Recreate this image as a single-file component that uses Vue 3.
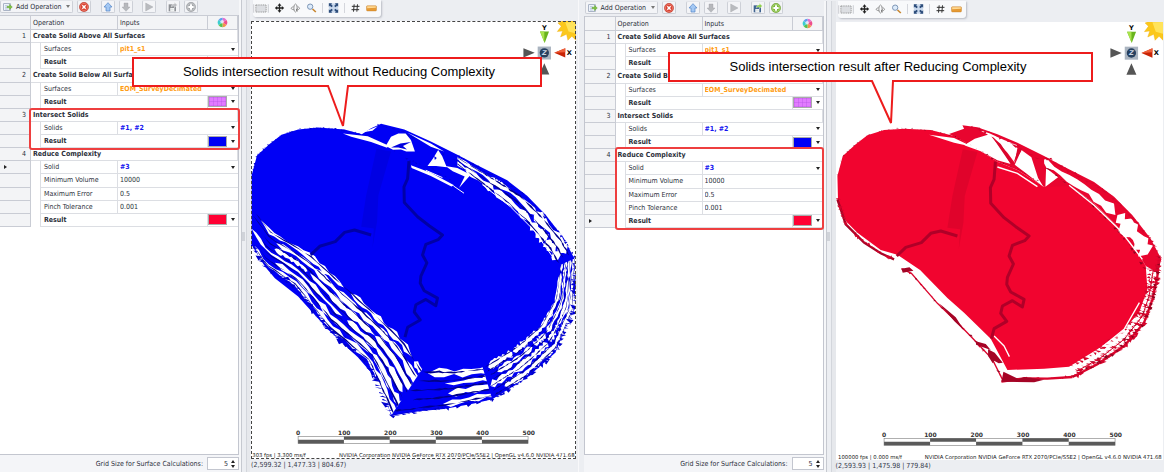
<script setup>
const refs = ['#1', '#2', '#3']

function makeRows(rowAt) {
  const rows = [
    { kind: 'group', n: 1, name: 'Create Solid Above All Surfaces' },
    { kind: 'select', name: 'Surfaces', value: 'pit1_s1', tone: 'orange' },
    { kind: 'result', swatch: 'violet' },
    { kind: 'group', n: 2, name: 'Create Solid Below All Surfaces' },
    { kind: 'select', name: 'Surfaces', value: 'EOM_SurveyDecimated', tone: 'orange' },
    { kind: 'result', swatch: 'violet' },
    { kind: 'group', n: 3, name: 'Intersect Solids' },
    { kind: 'select', name: 'Solids', value: refs.slice(0, 2).join(', '), tone: 'blue' },
    { kind: 'result', swatch: 'bluefill' },
    { kind: 'group', n: 4, name: 'Reduce Complexity' },
    { kind: 'select', name: 'Solid', value: refs[2], tone: 'blue' },
    { kind: 'value', name: 'Minimum Volume', value: '10000' },
    { kind: 'value', name: 'Maximum Error', value: '0.5' },
    { kind: 'value', name: 'Pinch Tolerance', value: '0.001' },
    { kind: 'result', swatch: 'redfill' },
  ]
  rows[rowAt].current = true
  return rows
}

const apps = [
  {
    id: 'before', active: false, rows: makeRows(10),
    callout: 'Solids intersection result without Reducing Complexity',
    shape: '2,2 410,2 410,30 217,30 212,70 197,30 2,30', w: 412, textX: 208,
    fps: '303 fps | 3.300 ms/f', coords: '(2,599.32 | 1,477.33 | 804.67)',
  },
  {
    id: 'after', active: true, rows: makeRows(14),
    callout: 'Solids intersection result after Reducing Complexity',
    shape: '2,2 425,2 425,30 226,30 224,72 205,30 2,30', w: 427, textX: 211,
    fps: '100000 fps | 0.000 ms/f', coords: '(2,593.93 | 1,475.98 | 779.84)',
  },
]

/* Seeded generator keeps the broken mesh edges stable between renders */
function rng(seed) {
  let s = seed
  return () => {
    s = (s * 1664525 + 1013904223) % 4294967296
    return s / 4294967296
  }
}
function along(line, u) {
  const seg = []
  let total = 0
  for (let i = 1; i < line.length; i++) {
    const d = Math.hypot(line[i][0] - line[i - 1][0], line[i][1] - line[i - 1][1])
    seg.push(d)
    total += d
  }
  let d = Math.max(0, Math.min(1, u)) * total
  for (let i = 0; i < seg.length; i++) {
    if (d <= seg[i] || i === seg.length - 1) {
      const t = d / seg[i]
      return [line[i][0] + (line[i + 1][0] - line[i][0]) * t, line[i][1] + (line[i + 1][1] - line[i][1]) * t]
    }
    d -= seg[i]
  }
}
function between(a, b, u, v) {
  const p = along(a, u)
  const q = along(b, u)
  return [p[0] + (q[0] - p[0]) * v, p[1] + (q[1] - p[1]) * v]
}
const fmt = pts => 'M' + pts.map(p => p[0].toFixed(1) + ' ' + p[1].toFixed(1)).join('L') + 'Z'
function streaks(a, b, lanes, seed, step, thick, n = 6) {
  const r = rng(seed)
  let d = ''
  for (let k = 0; k < lanes; k++) {
    const v = (k + 0.5) / lanes
    let u = r() * step
    while (u < 1) {
      const len = step * (0.6 + r() * 1.8)
      const top = []
      const bot = []
      for (let i = 0; i <= n; i++) {
        const uu = u + (len * i) / n
        const w = i === 0 || i === n ? 0 : (thick * (0.25 + r() * 0.9)) / lanes
        const drift = (r() - 0.5) * 0.12 / lanes
        top.push(between(a, b, uu, v - w / 2 + drift))
        bot.unshift(between(a, b, uu, v + w / 2 + drift))
      }
      d += fmt(top.concat(bot))
      u += len * (0.8 + r() * 0.3)
    }
  }
  return d
}
function teeth(line, count, size, seed) {
  const r = rng(seed)
  let d = ''
  for (let i = 0; i < count; i++) {
    const p = along(line, (i + r() * 0.8) / count)
    const w = size * (0.4 + r() * 0.7)
    const dx = (r() - 0.5) * size
    const dy = (r() - 0.5) * size * 2
    d += fmt([[p[0] - w, p[1] - w * 0.4], [p[0] + w, p[1] + w * 0.2 * (r() - 0.5)], [p[0] + dx, p[1] + dy]])
  }
  return d
}

const leftIn = [[20, 270], [80, 345], [200, 415], [340, 540], [480, 672], [538, 758]]
const leftOut = [[20, 390], [60, 455], [150, 515], [250, 645], [370, 745], [440, 905]]
const baseIn = [[535, 757], [640, 762], [715, 755]]
const baseOut = [[440, 905], [600, 884], [745, 855]]
const bendIn = [[715, 755], [820, 690], [890, 630], [935, 550], [950, 450]]
const bendOut = [[745, 855], [850, 790], [940, 705], [990, 590], [996, 430]]
const topIn = [[944, 460], [911, 405], [846, 326], [784, 266], [700, 198], [640, 150]]
const topOut = [[992, 430], [960, 370], [900, 300], [835, 235], [750, 185], [640, 122]]
const crest = [[640, 140], [560, 92], [480, 52], [400, 30]]
const rimIn = [[20, 180], [36, 120], [75, 85], [110, 58], [160, 42], [220, 37], [300, 44], [370, 62], [430, 92], [500, 137], [560, 160], [630, 200]]

const white = streaks(leftIn, leftOut, 6, 15, 0.26, 0.92, 16) + streaks(baseIn, baseOut, 4, 7, 0.6, 0.8, 10) +
  streaks(bendIn, bendOut, 4, 23, 0.16, 1, 12) + streaks(topIn, topOut, 2, 31, 0.2, 1.15, 8)
const navy = streaks(leftIn, leftOut, 7, 77, 0.11, 0.22) + streaks(baseIn, baseOut, 5, 71, 0.2, 0.25) +
  streaks(bendIn, bendOut, 7, 73, 0.06, 0.25) + streaks(topIn, topOut, 3, 79, 0.1, 0.3)
const blueTeeth = teeth(leftOut, 60, 14, 5) + teeth(baseOut, 20, 10, 6) + teeth(bendOut, 55, 11, 8) +
  teeth(topOut, 40, 7, 9) + teeth(crest, 24, 7, 10) + teeth(rimIn, 60, 5, 12)

const redLeft = [[20, 250], [45, 325], [100, 380], [150, 412], [190, 430]]
const redSlope = [[212, 458], [242, 472], [320, 562], [385, 625], [440, 682], [485, 730], [515, 790]]
const redBase = [[512, 797], [580, 787], [650, 788], [725, 783]]
const redBend = [[725, 783], [800, 745], [880, 690], [940, 620], [965, 550], [980, 480], [985, 420]]
const redInner = [[720, 752], [800, 706], [870, 655], [925, 590], [950, 520], [960, 450]]
const redMid = [[740, 765], [810, 725], [880, 670], [935, 600], [955, 540], [968, 460]]
const redTeeth = teeth(redLeft, 26, 9, 41) + teeth(redSlope, 16, 6, 42) + teeth(redBase, 10, 8, 43) +
  teeth(redBend, 50, 13, 44) + teeth(redInner, 40, 10, 45) + teeth(topOut, 42, 8, 46) + teeth(crest, 22, 8, 47) +
  teeth(redMid, 40, 10, 50)
const redDark = teeth(redSlope, 12, 7, 48) + teeth(redBend, 32, 9, 49) + teeth(redMid, 24, 6, 53) +
  teeth(rimIn, 50, 4, 51) + teeth(topIn, 26, 7, 52)
const pl = pts => pts.map(p => p.join(',')).join(' ')
const redTop = streaks(topIn, topOut, 1, 33, 0.3, 0.9, 12)
</script>

<template>
  <main class="page">
    <section v-for="a in apps" :key="a.id" class="app" :class="a.id">
      <div class="panel">
        <div class="tools">
          <button class="btn add" type="button">
            <svg viewBox="0 0 30 30" class="ico"><rect x="2" y="5" width="20" height="20" fill="#eef3fb" stroke="#8795ad" stroke-width="2" /><path d="M6 11h8M6 16h6M6 21h8" stroke="#9fb0cc" stroke-width="2" /><path d="M12 13h7V7l9 8-9 8v-6h-7z" fill="#7fc241" stroke="#4d8d22" /></svg>
            <span>Add Operation</span><i class="caret"></i>
          </button>
          <button class="btn" type="button" aria-label="Delete"><svg viewBox="0 0 30 30" class="ico"><circle cx="15" cy="15" r="14" fill="#d9402f" stroke="#a3261a" /><circle cx="15" cy="15" r="11" fill="none" stroke="#ef8a7c" stroke-width="2" /><path d="M10 10l10 10M20 10L10 20" stroke="#fff" stroke-width="4" /></svg></button>
          <button class="btn up" type="button" aria-label="Move up"><svg viewBox="0 0 30 30" class="ico"><path d="M15 2L27 15H21V27H9V15H3z" fill="#a3c8f4" stroke="#4f82c6" stroke-width="2" /></svg></button>
          <button class="btn" type="button" aria-label="Move down"><svg viewBox="0 0 30 30" class="ico"><path d="M15 28L27 15H21V3H9V15H3z" fill="#b6b8bc" stroke="#999ca1" /></svg></button>
          <button class="btn play" type="button" aria-label="Run"><svg viewBox="0 0 30 30" class="ico"><path d="M5 3L27 15L5 27z" fill="#b9bbbf" stroke="#999ca1" /></svg></button>
          <button class="btn save" type="button" aria-label="Export"><svg viewBox="0 0 30 30" class="ico"><path d="M2 7H24V28H2z" :fill="a.active ? '#3f6390' : '#8d9095'" /><path d="M7 18H19V28H7z" fill="#fff" /><path d="M9 21h8M9 24h8" stroke="#9aa" stroke-width="1" /><path d="M10 15c0-7 3-9 9-9V1l9 8-9 8v-5c-4 0-6 0-9 3z" :fill="a.active ? '#8ed04b' : '#b9bbbf'" stroke="#fff" /></svg></button>
          <button class="btn" type="button" aria-label="Add"><svg viewBox="0 0 30 30" class="ico"><circle cx="15" cy="15" r="14" :fill="a.active ? '#7ab82f' : '#a3a6aa'" :stroke="a.active ? '#4f8519' : '#85888d'" /><circle cx="15" cy="15" r="11" fill="none" stroke="#fff" stroke-opacity=".5" stroke-width="2" /><path d="M12 7h6v5h5v6h-5v5h-6v-5H7v-6h5z" fill="#fff" /></svg></button>
        </div>
        <div class="gridbox">
          <table class="ops">
            <colgroup><col class="c1"><col class="c2"><col class="c3"><col class="c4"><col class="c5"></colgroup>
            <thead>
              <tr><th></th><th colspan="2">Operation</th><th>Inputs</th>
                <th class="wheelcell"><svg class="wheel" viewBox="0 0 30 30"><path d="M15 15L15 2A13 13 0 0 1 26 8z" fill="#e26fd0" /><path d="M15 15L26 8A13 13 0 0 1 26 22z" fill="#ee4f8c" /><path d="M15 15L26 22A13 13 0 0 1 15 28z" fill="#f3934b" /><path d="M15 15L15 28A13 13 0 0 1 4 22z" fill="#57c24f" /><path d="M15 15L4 22A13 13 0 0 1 4 8z" fill="#3ccfd0" /><path d="M15 15L4 8A13 13 0 0 1 15 2z" fill="#5d9ff0" /><circle cx="14" cy="13" r="5" fill="#fff" fill-opacity=".7" /></svg></th></tr>
            </thead>
            <tbody>
              <tr v-for="(r, i) in a.rows" :key="i">
                <td class="num"><span v-if="r.current" class="cur"></span>{{ r.n }}</td>
                <td v-if="r.kind === 'group'" colspan="4" class="group">{{ r.name }}</td>
                <template v-else>
                  <td class="indent"></td>
                  <template v-if="r.kind === 'result'">
                    <td colspan="2" class="name bold">Result</td>
                    <td class="swcell"><button class="swbtn" type="button" aria-label="Result colour"><span class="sw" :class="r.swatch"></span><i class="caret dark"></i></button></td>
                  </template>
                  <template v-else>
                    <td class="name"><label :for="a.id + i">{{ r.name }}</label></td>
                    <td colspan="2" class="val">
                      <div v-if="r.kind === 'select'" class="selwrap"><select :id="a.id + i" :class="r.tone"><option>{{ r.value }}</option></select><i class="caret dark"></i></div>
                      <input v-else :id="a.id + i" type="text" :value="r.value">
                    </td>
                  </template>
                </template>
              </tr>
            </tbody>
          </table>
          <div class="mark"></div>
        </div>
        <div class="foot">
          <label :for="a.id + '-size'">Grid Size for Surface Calculations:</label>
          <div class="spin"><input :id="a.id + '-size'" type="text" value="5"><span class="arrows"><button type="button" aria-label="Increase"></button><button type="button" class="dn" aria-label="Decrease"></button></span></div>
        </div>
      </div>
      <div class="split"><i></i></div>
      <div class="view">
        <div class="vtop">
          <div class="vtools">
            <button type="button" aria-label="Select area"><svg viewBox="0 0 45 36"><rect x="8" y="8" width="29" height="20" fill="#dcdee2" stroke="#777" stroke-width="2" stroke-dasharray="3 2" /><path d="M2 6V30M43 6V30" stroke="#b9bcc2" stroke-width="2" /></svg></button>
            <button type="button" aria-label="Pan"><svg viewBox="0 0 30 30"><path d="M15 1l6 7h-4v5h5V9l7 6-7 6v-4h-5v5h4l-6 7-6-7h4v-5H8v4l-7-6 7-6v4h5V8H9z" fill="#222" /></svg></button>
            <button type="button" aria-label="Rotate"><svg viewBox="0 0 30 30" fill="none" stroke="#666" stroke-width="2"><ellipse cx="15" cy="15" rx="5" ry="12" /><path d="M9 11C-1 14 0 19 10 20M21 11c10 3 7 9-3 10" /><path d="M21 16l-4 5 5 4" /></svg></button>
            <button type="button" aria-label="Zoom"><svg viewBox="0 0 30 30"><path d="M18 18l10 9" stroke="#c8862e" stroke-width="5" /><circle cx="11" cy="11" r="8" fill="#dcebfb" stroke="#7d95b5" stroke-width="3" /></svg></button>
            <b></b>
            <button type="button" aria-label="Fit"><svg viewBox="0 0 30 30"><rect x="1" y="1" width="28" height="28" fill="#c9d8ec" /><path d="M1 1h10L8 4l5 5-4 4-5-5-3 3zM29 1v10l-3-3-5 5-4-4 5-5-3-3zM1 29V19l3 3 5-5 4 4-5 5 3 3zM29 29H19l3-3-5-5 4-4 5 5 3-3z" fill="#2d4d7b" /></svg></button>
            <b></b>
            <button type="button" aria-label="Grid"><svg viewBox="0 0 30 30"><path d="M11 4L9 26M21 4l-2 22M4 10h23M3 20h23" stroke="#333" stroke-width="3" /></svg></button>
            <button type="button" aria-label="Plane"><svg viewBox="0 0 32 30"><rect x="1" y="8" width="30" height="16" rx="3" fill="#e59a35" stroke="#b87016" /><path d="M3 10h26v4L3 16z" fill="#ffd994" /></svg></button>
          </div>
        </div>
        <div class="scenebox">
          <svg class="scene" viewBox="18 -282 978 1314">
            <template v-if="!a.active">
              <path fill="#0000f5" d="M20 180L36 120L75 85L110 58L160 42L220 36L300 42L352 56L380 38L410 25L480 42L560 78L640 118L700 150L790 195L850 242L905 298L960 368L992 430L996 500L990 590L962 650L935 715L850 790L745 855L690 868L600 884L530 890L440 905L420 840L385 780L340 728L250 645L160 545L90 490L60 455L20 390Z" />
              <path fill="#fff" :d="white" />
              <path fill="#00008c" :d="navy" />
              <path fill="#0000d0" :d="blueTeeth" />
              <path fill="#fff" d="M295 54L370 62L432 90L428 97L380 80L320 64zM424 92L440 64L462 54L484 54L500 74L512 108L486 108L470 102L446 103zM550 152L566 130L582 104L594 122L608 156L576 152zM604 152L640 158L680 178L645 218L662 184L626 168zM500 150L560 172L630 210L622 214L560 182L502 158zM355 50L400 32L384 46zM490 52L560 84L600 108L560 94z" />
              <path fill="#0000e0" d="M440 96L468 84L500 80L476 92L488 102L462 96zM570 122l8 6-6 6z" />
              <path fill="none" stroke="#fff" stroke-width="3" d="M628 212L660 234M715 208L800 275L870 345L930 430M545 165l50 22" />
            </template>
            <template v-else>
              <path fill="#f1042f" d="M20 180L36 120L75 85L110 58L160 42L220 38L300 42L370 60L430 92L500 137L560 162L640 212L690 180L720 210L790 262L850 320L915 400L945 450L950 520L925 590L870 650L800 700L715 752L640 758L530 762L480 668L400 590L350 546L268 462L200 416L150 402L80 350L45 315L22 260z" />
              <path fill="#e8052f" d="M355 54L400 38L395 28L440 34L500 55L560 80L640 120L700 152L790 198L850 242L905 298L960 368L992 430L980 470L945 450L915 400L850 320L790 262L720 210L640 212L560 162L500 137L430 92z" />
              <path fill="#fff" :d="redTop" />
              <path fill="#fff" d="M400 88L432 68L476 55L514 100L540 144L500 133L450 106zM446 42L476 52L520 72L560 88L546 96L490 66zM484 60L560 96L552 140L530 110zM552 146L572 102L602 124L622 186L638 212L586 172zM646 156L682 184L644 212zM295 56L370 66L425 92L370 80z" />
              <path fill="#d9052c" d="M484 62L510 84L550 146L540 144zM548 142L562 100L572 104z" />
              <g fill="none" stroke="#dc052d">
                <polyline :points="pl(redLeft)" stroke-width="7" stroke="#a50426" />
                <polyline :points="pl(redSlope)" stroke-width="4" />
                <polyline :points="pl(redBase)" stroke-width="7" />
                <polyline :points="pl(redBend)" stroke-width="7" />
                <polyline :points="pl(redMid)" stroke-width="3" />
              </g>
              <path fill="#d5042c" :d="redTeeth" />
              <path fill="#8f0420" :d="redDark" />
              <path fill="#a50426" d="M212 458l24-4 12 10-32 6zM325 562l50 42 26 40-30-28zM435 676l30 8 15 18-44-16zM472 700l20 10 24 30-12 2-14-8-4 8-14-22zM512 797l6-30 46 22 16-6 60 8-30 8z" />
              <path fill="none" stroke="#fff" stroke-width="4" d="M500 153L560 172L620 212M715 208L790 268L870 345L935 430M490 660L520 690L536 722M815 692L880 640L926 560" />
            </template>
            <path fill="#000" fill-opacity=".07" d="M396 100L440 108L402 240L398 320L384 400L388 340L350 335L365 240z" />
            <g fill="none" stroke-linejoin="round" stroke-width="9" :stroke="a.active ? '#b00028' : '#0000a6'">
              <path d="M494 137L490 190L479 215L480 262L520 305L555 332L595 360L582 374L545 388L535 420L548 444L530 484L528 505L540 528L580 550L575 573L545 554L515 570L510 592L528 616L490 638L482 668" />
              <path d="M198 420L225 394L272 380L300 352L330 345L380 360" />
            </g>
            <g transform="translate(-15 -345)">
              <path fill="#fbc81c" stroke="#eda400" d="M1012 20L1012 118L1000 106L988 118L984 100L966 108L972 90L956 92L968 76L958 66L968 62z" />
              <path fill="#ffe35a" d="M1012 63L1012 98L990 92L980 64z" />
              <path fill="#69b41d" d="M904 92H931L918 126z" /><path fill="#a8e34c" d="M904 92H917V124z" />
              <rect x="897" y="137" width="40" height="39" fill="#aab4c0" /><circle cx="917" cy="156" r="14" fill="#26405f" />
              <path fill="#c92405" d="M947 156L980 142V170z" /><path fill="#f0603a" d="M947 156L980 142V154z" />
              <path fill="#555" d="M854 142L888 156L854 170zM902 221L917 187L932 221z" />
              <g class="axis"><text x="917" y="88">Y</text><text x="992" y="163">X</text><text x="917" y="163" class="z">Z</text></g>
            </g>
            <g transform="translate(-15 915)">
              <g fill="#fff" stroke="#888" stroke-width="2"><rect x="175" y="52" width="693" height="21" /></g>
              <path fill="#5a5a5a" d="M313 52H451V62H313zM590 52H729V62H590zM175 62H313V73H175zM451 62H590V73H451zM729 62H868V73H729z" />
              <g class="ticks"><text v-for="(t, k) in [0, 100, 200, 300, 400, 500]" :key="t" :x="175 + k * 139" y="48">{{ t }}</text></g>
              <g class="gpu"><text x="37" y="114">{{ a.fps }}</text><text x="1008" y="114" text-anchor="end">NVIDIA Corporation NVIDIA GeForce RTX 2070/PCIe/SSE2 | OpenGL v4.6.0 NVIDIA 471.68</text></g>
            </g>
          </svg>
        </div>
        <div class="status">{{ a.coords }}</div>
      </div>
      <svg class="callout" :width="a.w" height="76" :viewBox="'0 0 ' + a.w + ' 76'">
        <polygon :points="a.shape" fill="#fff" stroke="#ed1c1c" stroke-width="2" />
        <text :x="a.textX" y="20" text-anchor="middle">{{ a.callout }}</text>
      </svg>
    </section>
  </main>
</template>

<style>
html, body { background: #eceef2; }
</style>
<style scoped>
* { box-sizing: border-box; }
.page { display: flex; height: 100vh; overflow: hidden; font: 7px/10px "DejaVu Sans Condensed", "DejaVu Sans", sans-serif; color: #2b2f3a; background: #eceef2; }
button, input, select { font: inherit; color: inherit; margin: 0; padding: 0; border: 0; background: none; }
.app { position: relative; display: flex; flex: 580 1 0; min-width: 0; padding-right: 2px; }
.after { flex-grow: 584; padding: 1px 1px 0 5px; border-left: 1px solid #f8f8fa; }
.panel { display: flex; flex-direction: column; width: 239px; flex: none; }
.after .panel { width: 240px; }
.tools { display: flex; height: 15px; flex: none; }
.after .tools { padding-left: 1px; }
.btn { display: flex; align-items: center; justify-content: center; width: 14px; height: 13px; border: 1px solid #cdd0d7; border-top-color: #e2e4e9; border-radius: 2px; background: #f3f4f7; margin-right: 4px; }
.add { width: 73px; justify-content: flex-start; padding-left: 2px; gap: 3px; }
.add .caret { margin-left: auto; margin-right: 2px; }
.ico { width: 10px; height: 10px; flex: none; }
.up { margin-left: 6px; }
.play { margin-left: 5px; }
.save { margin-left: 6px; }
.caret { width: 0; height: 0; border: 2px solid transparent; border-top: 3px solid #777; border-bottom: 0; }
.dark { border-top-color: #222; }
.gridbox { position: relative; flex: 1; background: #fff; border: 1px solid #c3c6cf; border-left: 0; border-top: 0; }
.after .gridbox { border-left: 1px solid #c3c6cf; }
.ops { width: 100%; height: 212px; table-layout: fixed; border-collapse: separate; border-spacing: 0; }
.c1 { width: 31px; } .c2 { width: 10px; } .c3 { width: 77px; } .c4 { width: 90px; }
th, td { padding: 0; height: 13px; border-right: 1px solid #dcdee3; border-bottom: 1px solid #dcdee3; text-align: left; font-weight: normal; white-space: nowrap; overflow: hidden; }
th { height: 15px; padding-left: 2px; background: #f3f4f6; border-top: 1px solid #c9ccd4; border-color: #c9ccd4; }
.wheelcell { text-align: center; padding: 0; line-height: 0; }
.wheel { width: 11px; height: 11px; }
.num { position: relative; background: #f3f4f6; text-align: right; padding-right: 4px; border-color: #c9ccd4; }
.cur { position: absolute; left: 4px; top: 4px; border: 2px solid transparent; border-left: 3px solid #222; border-right: 0; }
.group { font-weight: bold; padding-left: 2px; }
.indent { border-bottom: 0; }
.name { padding-left: 3px; }
.bold { font-weight: bold; }
.val { padding-left: 2px; border-right: 0; }
.val input { display: block; width: 100%; height: 11px; }
.selwrap { display: flex; align-items: center; padding-right: 3px; }
select { flex: 1; appearance: none; font-weight: bold; height: 11px; }
.orange { color: #ff9c12; }
.blue { color: #1414f0; }
.swcell { border-right: 0; }
.swbtn { display: flex; width: 100%; align-items: center; justify-content: space-between; padding: 0 3px 0 0; }
.sw { width: 19px; height: 11px; border: 1px solid #aaa; }
.violet { background: repeating-linear-gradient(90deg, #b04fe055 0 1px, transparent 1px 4px), repeating-linear-gradient(#b04fe055 0 1px, transparent 1px 4px), #e27bff; }
.bluefill { background: #0000f5; }
.redfill { background: #ff0033; }
.mark { position: absolute; left: 29px; right: -2px; top: 93px; height: 42px; border: 2px solid #ee3f3f; border-radius: 3px; }
.after .mark { left: 30px; right: -1px; top: 131px; height: 83px; }
.foot { display: flex; align-items: center; justify-content: flex-end; gap: 4px; height: 17px; flex: none; background: #f4f5f8; }
.spin { display: flex; width: 32px; height: 13px; background: #fff; border: 1px solid #c3c6cf; }
.spin input { flex: 1; min-width: 0; text-align: right; padding-right: 3px; }
.arrows { display: flex; flex-direction: column; justify-content: center; gap: 2px; width: 7px; }
.arrows button { width: 0; height: 0; border: 2px solid transparent; border-bottom: 3px solid #222; border-top: 0; }
.arrows .dn { border-top: 3px solid #222; border-bottom: 0; }
.split { display: flex; align-items: center; width: 11px; flex: none; margin: 0 1px 0 0; border-left: 2px solid #f6f7f9; background: linear-gradient(90deg, #c6c9d0 0 1px, #eceef2 1px 5px, #d3d6dc 5px 6px, #e6e8ec 6px); }
.after .split { width: 12px; margin: 0; }
.split i { width: 3px; height: 9px; margin-left: 1px; background: #d0d3d9; }
.view { display: flex; flex-direction: column; flex: 1; min-width: 0; }
.vtop { height: 21px; flex: none; padding-left: 2px; }
.vtools { display: flex; align-items: center; width: 128px; height: 17px; padding: 0 4px 1px 0; justify-content: space-between; background: #f8f9fb; border-radius: 0 0 3px 3px; box-shadow: 1px 1px 2px #b9bcc4; }
.vtools button { display: flex; width: 11px; height: 10px; }
.vtools button:first-child { width: 16px; height: 13px; }
.vtools svg { width: 100%; height: 100%; }
.vtools b { width: 1px; height: 10px; background: #d4d6dc; }
.scenebox { flex: none; height: 438px; background: #fff; }
.before .scenebox { outline: 1px dashed #444; outline-offset: -1px; }
.scene { display: block; width: 100%; height: 100%; }
.axis { font: bold 20px "DejaVu Sans", sans-serif; text-anchor: middle; }
.z { font-style: italic; fill: #c8d4e4; }
.ticks { font: bold 18px "DejaVu Sans", sans-serif; text-anchor: middle; fill: #333; }
.gpu { font: 16px "DejaVu Sans", sans-serif; fill: #222; }
.status { flex: 1; font-size: 7px; line-height: 13px; color: #333849; }
.callout { position: absolute; left: 131px; top: 56px; }
.after .callout { left: 88px; top: 51px; }
.callout text { font: 13px "Liberation Sans", Arial, sans-serif; fill: #000; }
</style>
